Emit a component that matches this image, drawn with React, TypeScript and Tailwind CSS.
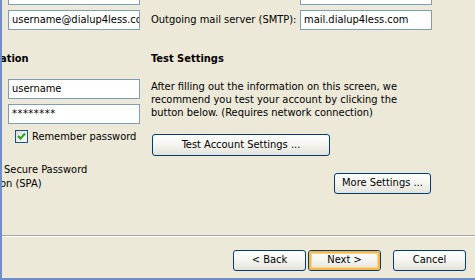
import React from 'react';

const font = { fontFamily: '"DejaVu Sans Condensed", "DejaVu Sans", sans-serif' };

const TextBox: React.FC<{ value?: string; className?: string }> = ({ value = '', className = '' }) => (
  <div
    className={`h-[20px] w-[132px] border border-[#7F9DB9] bg-white px-[3px] text-[11px] leading-[18px] text-black whitespace-nowrap overflow-hidden ${className}`}
  >
    {value}
  </div>
);

const XpButton: React.FC<{ label: string; className?: string; focused?: boolean }> = ({ label, className = '', focused }) => (
  <div
    className={`flex items-center justify-center rounded-[3px] border border-[#003C74] bg-gradient-to-b from-white via-[#F4F4F0] to-[#E3E2DA] text-[11px] text-black ${className}`}
  >
    <div
      className={`flex h-full w-full items-center justify-center rounded-[2px] ${
        focused ? 'border-2 border-[#F9B748] shadow-[inset_0_0_0_1px_#FCD38B]' : ''
      }`}
    >
      {label}
    </div>
  </div>
);

export default function App() {
  return (
    <div
      style={font}
      className="relative h-[280px] w-[475px] overflow-hidden border-b-2 border-l-2 border-[#6F8FC6] bg-[#ECE9D8] text-[11px] text-black"
    >
      <div className="flex h-[235px]">
        {/* left column */}
        <div className="flex w-[149px] shrink-0 flex-col">
          <TextBox className="-mt-[15px] ml-[6px]" />
          <TextBox className="ml-[6px] mt-[5px]" value="username@dialup4less.co" />
          <div className="-ml-[2px] mt-[22px] h-[13px] text-[11px] font-bold leading-[13px]">ation</div>
          <TextBox className="ml-[6px] mt-[14px]" value="username" />
          <TextBox className="ml-[6px] mt-[5px] tracking-[0.5px]" value="********" />
          <div className="ml-[13px] mt-[6px] flex items-center gap-[4px] leading-[13px]">
            <div className="flex h-[13px] w-[13px] items-center justify-center border border-[#1C5180] bg-gradient-to-br from-[#DCDBD5] to-white">
              <svg width="9" height="9" viewBox="0 0 9 9">
                <path d="M1 4 L3.5 6.5 L8 1.5" stroke="#21A121" strokeWidth="2" fill="none" />
              </svg>
            </div>
            <span>Remember password</span>
          </div>
          <div className="-ml-[2px] mt-[20px] whitespace-nowrap leading-[14px]">
            <div className="pl-[4px]">Secure Password</div>
            <div>on (SPA)</div>
          </div>
        </div>

        {/* right column */}
        <div className="flex flex-1 flex-col">
          <TextBox className="-mt-[15px] ml-[149px]" />
          <div className="mt-[5px] flex items-center">
            <span className="w-[149px] whitespace-nowrap">Outgoing mail server (SMTP):</span>
            <TextBox value="mail.dialup4less.com" />
          </div>
          <div className="mt-[22px] h-[13px] font-bold leading-[13px]">Test Settings</div>
          <div className="mt-[15px] whitespace-nowrap leading-[13px]">
            After filling out the information on this screen, we
            <br />
            recommend you test your account by clicking the
            <br />
            button below. (Requires network connection)
          </div>
          <XpButton label="Test Account Settings ..." className="ml-[1px] mt-[15px] h-[22px] w-[178px]" />
          <div className="mt-[17px] flex">
            <XpButton label="More Settings ..." className="ml-[183px] h-[21px] w-[97px]" />
          </div>
        </div>
      </div>

      {/* separator */}
      <div className="h-[2px] border-t border-b border-t-[#ACA899] border-b-white" />

      {/* wizard buttons */}
      <div className="mt-[13px] flex">
        <XpButton label="< Back" className="ml-[231px] h-[21px] w-[73px]" />
        <XpButton label="Next >" focused className="ml-[2px] h-[21px] w-[73px]" />
        <XpButton label="Cancel" className="ml-[12px] h-[21px] w-[73px]" />
      </div>
    </div>
  );
}
